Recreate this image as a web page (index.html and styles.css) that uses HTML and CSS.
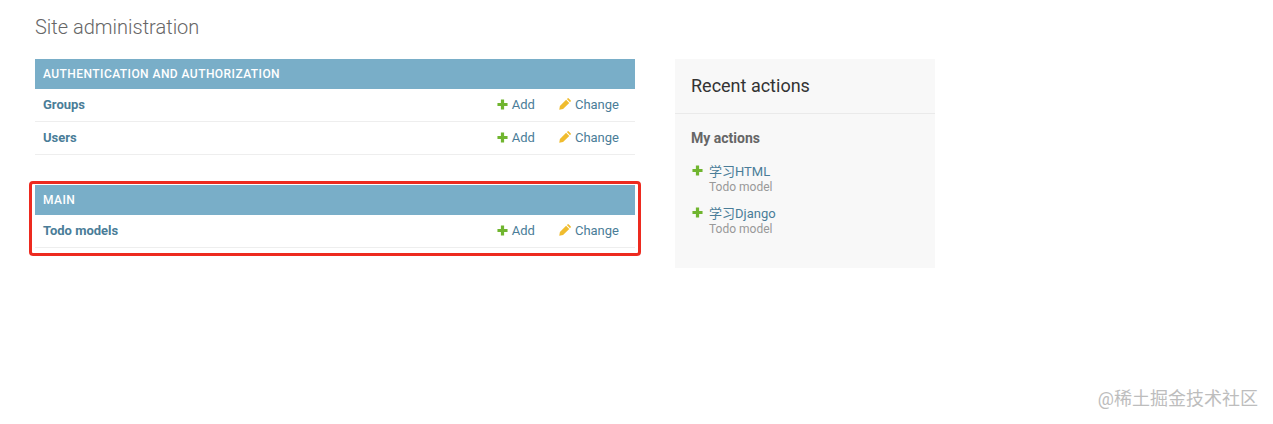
FILE: index.html
```html
<!DOCTYPE html>
<html lang="en">
<head>
<meta charset="utf-8">
<title>Site administration</title>
<link rel="stylesheet" href="styles.css">
</head>
<body>
<svg class="defs" width="0" height="0" aria-hidden="true">
  <symbol id="i-add" viewBox="0 0 24 24"><path d="M8.5 1h7v7.500h7.500v7h-7.500V23h-7v-7.500H1v-7h7.500z" fill="#70b52f"/></symbol>
  <symbol id="i-change" viewBox="0 0 24 24"><path d="M.5 23.500l1.300-7.600L14.200 3.500l6.300 6.300L8.100 22.200zM15.700 2l1.300-1.200a1.800 1.800 0 0 1 2.500 0l3.700 3.700a1.800 1.800 0 0 1 0 2.500L22 8.300z" fill="#f0bc2e"/></symbol>
</svg>
<main class="page">
  <h1 class="title">Site administration</h1>
  <div class="columns">
    <div class="content">
      <section class="module">
        <h2 class="caption">Authentication and Authorization</h2>
        <div class="row">
          <a class="model">Groups</a>
          <a class="action"><svg class="icon icon-add"><use href="#i-add"/></svg>Add</a>
          <a class="action action-change"><svg class="icon"><use href="#i-change"/></svg>Change</a>
        </div>
        <div class="row">
          <a class="model">Users</a>
          <a class="action"><svg class="icon icon-add"><use href="#i-add"/></svg>Add</a>
          <a class="action action-change"><svg class="icon"><use href="#i-change"/></svg>Change</a>
        </div>
      </section>
      <section class="module">
        <div class="highlight"></div>
        <h2 class="caption">Main</h2>
        <div class="row">
          <a class="model">Todo models</a>
          <a class="action"><svg class="icon icon-add"><use href="#i-add"/></svg>Add</a>
          <a class="action action-change"><svg class="icon"><use href="#i-change"/></svg>Change</a>
        </div>
      </section>
    </div>
    <aside class="sidebar">
      <h2 class="side-title">Recent actions</h2>
      <div class="side-body">
        <h3 class="side-sub">My actions</h3>
        <ul class="actions">
          <li class="entry">
            <svg class="icon entry-icon"><use href="#i-add"/></svg>
            <div><a class="entry-link">学习HTML</a><span class="entry-type">Todo model</span></div>
          </li>
          <li class="entry">
            <svg class="icon entry-icon"><use href="#i-add"/></svg>
            <div><a class="entry-link">学习Django</a><span class="entry-type">Todo model</span></div>
          </li>
        </ul>
      </div>
    </aside>
  </div>
</main>
<div class="watermark">@稀土掘金技术社区</div>
</body>
</html>
```

FILE: styles.css
```css
* { box-sizing: border-box; }
html, body { margin: 0; padding: 0; }
body {
  background: #fff;
  color: #333;
  font-family: Roboto, "Noto Sans CJK SC", sans-serif;
  font-size: 14px;
  height: 424px;
  overflow: hidden;
  position: relative;
}
.defs { position: absolute; }
.page { padding: 15px 35px 0; }
.title {
  margin: 0 0 20px;
  font-size: 20px;
  line-height: 24px;
  font-weight: 300;
  color: #666;
}
.columns { display: flex; gap: 40px; align-items: flex-start; }
.content { width: 600px; }
.module { position: relative; margin-bottom: 30px; }
.caption {
  margin: 0;
  height: 30px;
  padding: 0 8px;
  background: #79aec8;
  color: #fff;
  font-size: 12px;
  font-weight: 500;
  line-height: 30px;
  letter-spacing: 0.44px;
  text-transform: uppercase;
}
.row {
  display: flex;
  align-items: center;
  height: 33px;
  padding: 0 16px 2px 8px;
  border-bottom: 1px solid #eee;
  font-size: 13px;
}
.model { margin-right: auto; font-weight: 700; color: #4a7d98; }
.action { display: flex; align-items: center; color: #4a7d98; }
.action-change { margin-left: 24px; }
.icon { width: 12px; height: 12px; flex: none; }
.action .icon { margin-right: 4px; }
.action .icon-add { width: 11px; height: 11px; }
.highlight {
  position: absolute;
  left: -6px; top: -4px; right: -6px; bottom: -8px;
  border: 3px solid #ed2a1f;
  border-radius: 4px;
  pointer-events: none;
}
.sidebar { width: 260px; height: 209px; background: #f8f8f8; }
.side-title {
  margin: 0;
  height: 55px;
  padding: 0 16px;
  border-bottom: 1px solid #eaeaea;
  font-size: 18px;
  font-weight: 400;
  line-height: 53px;
  color: #333;
}
.side-body { padding: 16px; }
.side-sub { margin: 0 0 17px; font-size: 14px; line-height: 17px; font-weight: 700; color: #666; }
.actions { list-style: none; margin: 0; padding: 0; }
.entry { display: flex; margin-bottom: 12px; font-size: 13px; }
.entry-icon { margin: 1px 6px 0 1px; width: 11px; height: 11px; }
.entry-link { display: block; line-height: 16px; color: #4a7d98; }
.entry-type { display: block; font-size: 12px; line-height: 14px; color: #999; }
.watermark {
  position: absolute;
  right: 15px;
  top: 388px;
  font-size: 18px;
  line-height: 22px;
  color: #bdbdbd;
}
```
